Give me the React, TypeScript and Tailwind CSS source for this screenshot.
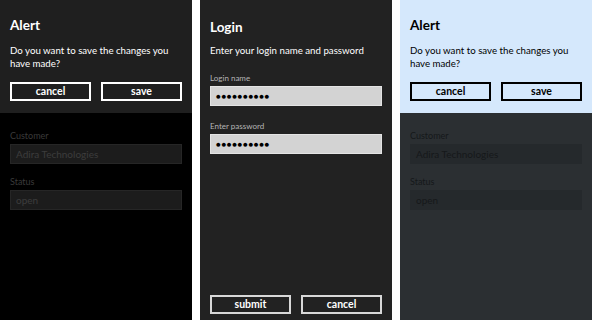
import React from 'react';

const font = { fontFamily: 'Lato, "Noto Sans", sans-serif' };

type Theme = 'dark' | 'light';

const OutlineButton: React.FC<{ label: string; theme: Theme }> = ({ label, theme }) => (
  <div
    className={`flex-1 h-[19px] flex items-center justify-center text-[10.5px] font-bold border-2 ${
      theme === 'dark' ? 'border-white text-white' : 'border-black text-black'
    }`}
  >
    {label}
  </div>
);

const AlertPanel: React.FC<{ theme: Theme }> = ({ theme }) => {
  const light = theme === 'light';
  const labelColor = light ? 'text-[#15181a]' : 'text-[#3a3a3a]';
  const boxColor = light
    ? 'bg-[#25292c] border-[#25292c] text-[#15181a]'
    : 'bg-[#1c1c1c] border-[#262626] text-[#3c3c3c]';
  return (
    <div className={`w-[192px] h-[320px] flex flex-col ${light ? 'bg-[#2b2f32]' : 'bg-black'}`}>
      <div className={`h-[113px] px-[10px] pt-[17px] ${light ? 'bg-[#d5e8fc] text-black' : 'bg-[#1f1f1f] text-white'}`}>
        <div className="text-[13.5px] font-bold leading-[16px]">Alert</div>
        <div className="mt-[11px] text-[9.7px] leading-[13px]">Do you want to save the changes you have made?</div>
        <div className="mt-[12px] flex gap-[10px]">
          <OutlineButton label="cancel" theme={theme} />
          <OutlineButton label="save" theme={theme} />
        </div>
      </div>
      <div className="px-[10px] pt-[17px]">
        <div className={`text-[9px] leading-[12px] ${labelColor}`}>Customer</div>
        <div className={`mt-[2px] h-[20px] px-[5px] flex items-center text-[10px] border ${boxColor}`}>
          Adira Technologies
        </div>
        <div className={`mt-[12px] text-[9px] leading-[12px] ${labelColor}`}>Status</div>
        <div className={`mt-[2px] h-[20px] px-[5px] flex items-center text-[10px] border ${boxColor}`}>open</div>
      </div>
    </div>
  );
};

const PasswordBox: React.FC = () => (
  <div className="mt-[3px] h-[20px] px-[5px] flex items-center bg-[#d3d3d3] border border-[#e4e4e4] text-black text-[8px] tracking-[0.6px]">
    ●●●●●●●●●●
  </div>
);

const LoginPanel: React.FC = () => (
  <div className="w-[192px] h-[320px] bg-[#222222] px-[10px] pt-[19px] pb-[6px] flex flex-col text-white">
    <div className="text-[13.5px] font-bold leading-[16px]">Login</div>
    <div className="mt-[9px] text-[9.7px] leading-[13px]">Enter your login name and password</div>
    <div className="mt-[16px] text-[8px] leading-[10px] text-[#b5b5b5]">Login name</div>
    <PasswordBox />
    <div className="mt-[15px] text-[8px] leading-[10px] text-[#b5b5b5]">Enter password</div>
    <PasswordBox />
    <div className="mt-auto flex gap-[10px]">
      <div className="flex-1 h-[19px] flex items-center justify-center text-[10.5px] font-bold border-2 border-[#d8d8d8]">
        submit
      </div>
      <div className="flex-1 h-[19px] flex items-center justify-center text-[10.5px] font-bold border-2 border-[#d8d8d8]">
        cancel
      </div>
    </div>
  </div>
);

export default function App() {
  return (
    <div className="w-[592px] h-[320px] bg-white flex gap-[8px] overflow-hidden" style={font}>
      <AlertPanel theme="dark" />
      <LoginPanel />
      <AlertPanel theme="light" />
    </div>
  );
}
